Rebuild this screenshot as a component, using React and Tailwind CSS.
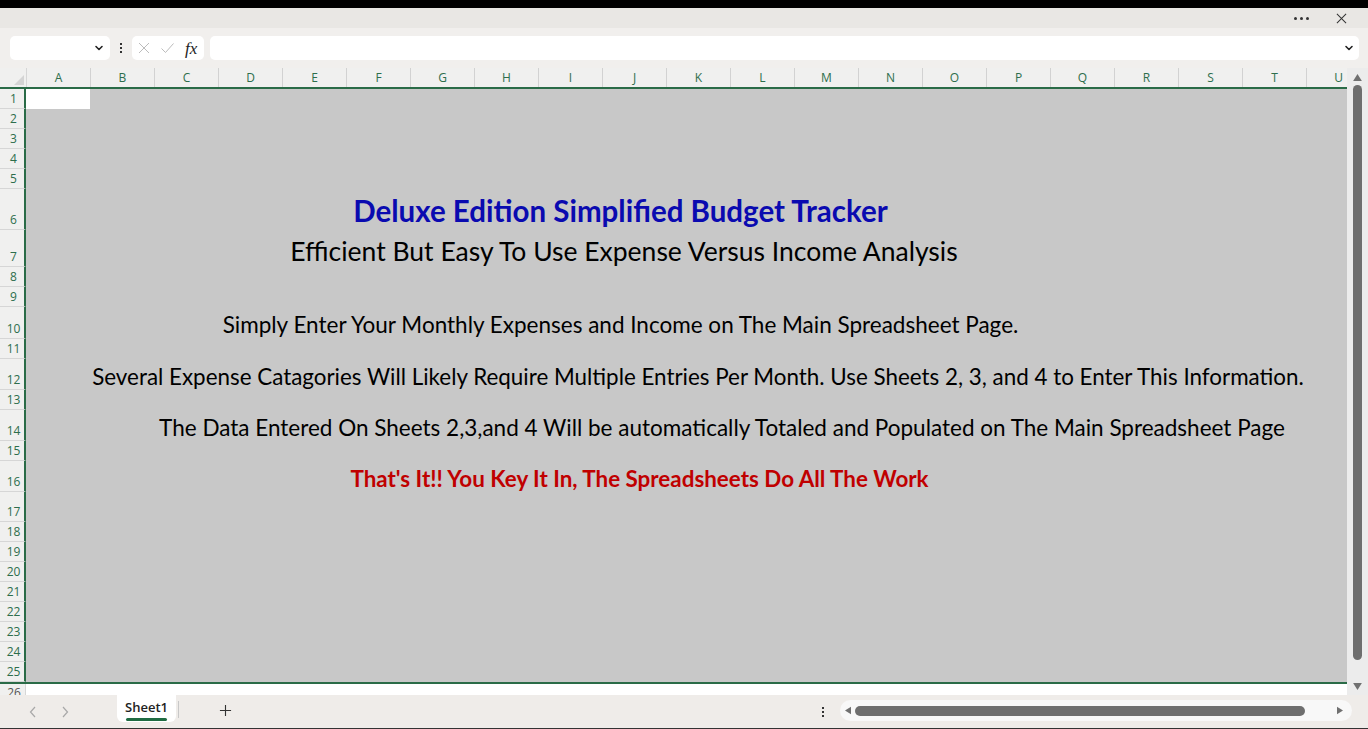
import React from "react";

const COLS = "ABCDEFGHIJKLMNOPQRSTU".split("");

// row number, height in px
const ROWS = [
  [1, 20], [2, 20], [3, 20], [4, 20], [5, 20],
  [6, 41], [7, 37], [8, 20], [9, 20], [10, 32],
  [11, 20], [12, 31], [13, 20], [14, 31], [15, 20],
  [16, 31], [17, 30], [18, 20], [19, 20], [20, 20],
  [21, 20], [22, 20], [23, 20], [24, 20], [25, 20],
];

// text placed in the sheet: left offset within the cell area, box width, classes
const CONTENT = {
  6: {
    left: 325, width: 539, pb: "pb-[5px]",
    cls: "text-[29.5px] font-bold text-[#0a0ab0]",
    text: "Deluxe Edition Simplified Budget Tracker",
  },
  7: {
    left: 262, width: 672, pb: "pb-[3px]",
    cls: "text-[26.5px] text-black",
    text: "Efficient But Easy To Use Expense Versus Income Analysis",
  },
  10: {
    left: 196, width: 797, pb: "pb-[3px]",
    cls: "text-[22.5px] text-black",
    text: "Simply Enter Your Monthly Expenses and Income on The Main Spreadsheet Page.",
  },
  12: {
    left: 68, width: 1208, pb: "pb-[2px]",
    cls: "text-[22.4px] text-black",
    text: "Several Expense Catagories Will Likely Require Multiple Entries Per Month. Use Sheets 2, 3, and 4 to Enter This Information.",
  },
  14: {
    left: 132, width: 1128, pb: "pb-[2px]",
    cls: "text-[22.5px] text-black",
    text: "The Data Entered On Sheets 2,3,and 4 Will be automatically Totaled and Populated on The Main Spreadsheet Page",
  },
  16: {
    left: 324, width: 579, pb: "pb-[2px]",
    cls: "text-[22.4px] font-bold text-[#c00000]",
    text: "That's It!! You Key It In, The Spreadsheets Do All The Work",
  },
};

function Chevron({ className = "" }) {
  return (
    <svg viewBox="0 0 10 10" className={className} fill="none" stroke="#222" strokeWidth="1.6" strokeLinecap="round" strokeLinejoin="round">
      <path d="M2 3.5 L5 6.5 L8 3.5" />
    </svg>
  );
}

function TitleBar() {
  return (
    <div className="h-5 bg-[#e9e7e4] flex items-center justify-end pr-[21px] gap-[27px] shrink-0">
      <div className="flex gap-[3px] items-center">
        <span className="w-[3px] h-[3px] rounded-full bg-[#333]" />
        <span className="w-[3px] h-[3px] rounded-full bg-[#333]" />
        <span className="w-[3px] h-[3px] rounded-full bg-[#333]" />
      </div>
      <svg viewBox="0 0 12 12" className="w-[11px] h-[11px]" stroke="#333" strokeWidth="1.1">
        <path d="M1 1 L11 11 M11 1 L1 11" />
      </svg>
    </div>
  );
}

function FormulaBar() {
  return (
    <div className="h-10 bg-[#f1efed] flex items-center pl-[10px] pr-[9px] shrink-0">
      <div className="w-[100px] h-[24px] bg-white rounded-[5px] flex items-center justify-end pr-[6px]">
        <Chevron className="w-[10px] h-[10px]" />
      </div>
      <div className="w-[22px] flex flex-col items-center gap-[2px]">
        <span className="w-[2px] h-[2px] bg-[#333]" />
        <span className="w-[2px] h-[2px] bg-[#333]" />
        <span className="w-[2px] h-[2px] bg-[#333]" />
      </div>
      <div className="w-[72px] h-[24px] bg-white rounded-[5px] flex items-center pl-[6px] gap-[10px]">
        <svg viewBox="0 0 12 12" className="w-[12px] h-[12px]" stroke="#bcbcbc" strokeWidth="1">
          <path d="M1 1 L11 11 M11 1 L1 11" />
        </svg>
        <svg viewBox="0 0 14 12" className="w-[15px] h-[12px]" fill="none" stroke="#bcbcbc" strokeWidth="1">
          <path d="M1 6.5 L5 10.5 L13 1.5" />
        </svg>
        <span className="text-[17px] italic text-[#222] font-['Liberation_Serif',serif] leading-none">
          fx
        </span>
      </div>
      <div className="ml-[6px] flex-1 h-[24px] bg-white rounded-[5px] flex items-center justify-end pr-[5px]">
        <Chevron className="w-[10px] h-[10px]" />
      </div>
    </div>
  );
}

function ColumnHeaders() {
  return (
    <div className="h-[21px] flex shrink-0 bg-[#f0f0ef] border-b-2 border-[#2a6b47]">
      <div className="w-[27px] shrink-0 relative border-r border-[#d6d6d6]">
        <svg viewBox="0 0 10 10" className="absolute right-[2px] bottom-[2px] w-[10px] h-[10px]">
          <path d="M10 0 L10 10 L0 10 Z" fill="#d4d4d4" />
        </svg>
      </div>
      <div className="flex overflow-hidden flex-1">
        {COLS.map((c) => (
          <div
            key={c}
            className="w-[64px] shrink-0 border-r border-[#d2d2d2] flex items-center justify-center text-[12px] text-[#2d6e4c] font-['Open_Sans',sans-serif]"
          >
            {c}
          </div>
        ))}
      </div>
    </div>
  );
}

function SheetRow({ n, h }) {
  const c = CONTENT[n];
  return (
    <div className="flex shrink-0" style={{ height: h }}>
      <div className="w-[26px] shrink-0 bg-[#f0f0ef] border-r-2 border-r-[#2a6b47] border-b border-b-[#d6d6d6] flex items-end justify-center pl-[3px] pb-[1px] text-[12px] leading-[16px] text-[#2d6e4c] font-['Open_Sans',sans-serif]">
        {n}
      </div>
      <div className="flex-1 bg-[#c8c8c8] flex items-end min-w-0">
        {n === 1 && <div className="w-[64px] h-full bg-white" />}
        {c && (
          <div
            className={`flex justify-center shrink-0 ${c.pb}`}
            style={{ marginLeft: c.left, width: c.width }}
          >
            <span className={`whitespace-nowrap leading-none font-['Lato',sans-serif] ${c.cls}`}>
              {c.text}
            </span>
          </div>
        )}
      </div>
    </div>
  );
}

function VScroll() {
  return (
    <div className="w-[21px] shrink-0 bg-[#ececec] flex flex-col items-center pt-[6px] pb-[3px]">
      <svg viewBox="0 0 10 8" className="w-[9px] h-[7px]">
        <path d="M5 0 L10 8 L0 8 Z" fill="#707070" />
      </svg>
      <div className="w-[9px] h-[575px] mt-[4px] rounded-full bg-[#6e6e6e]" />
      <div className="flex-1" />
      <svg viewBox="0 0 10 8" className="w-[9px] h-[7px] mb-[2px]">
        <path d="M0 0 L10 0 L5 8 Z" fill="#707070" />
      </svg>
    </div>
  );
}

function BottomBar() {
  return (
    <div className="h-[34px] shrink-0 bg-[#efece9] flex items-start border-b border-[#333]">
      <div className="w-[117px] h-full flex items-center pl-[29px] gap-[20px] text-[#a8a8a8]">
        <svg viewBox="0 0 8 12" className="w-[8px] h-[12px]" fill="none" stroke="#a8a8a8" strokeWidth="1.2">
          <path d="M6 1 L1.5 6 L6 11" />
        </svg>
        <svg viewBox="0 0 8 12" className="w-[8px] h-[12px] ml-[4px]" fill="none" stroke="#a8a8a8" strokeWidth="1.2">
          <path d="M2 1 L6.5 6 L2 11" />
        </svg>
      </div>
      <div className="w-[59px] h-[27px] bg-white rounded-b-[6px] flex flex-col items-center pt-[4px]">
        <span className="text-[13px] leading-[16px] font-semibold text-[#222] font-['Open_Sans',sans-serif]">
          Sheet1
        </span>
        <span className="mt-[3px] w-[41px] h-[3px] rounded-full bg-[#1f6b42]" />
      </div>
      <div className="w-px h-[17px] bg-[#c8c8c8] mt-[6px] ml-[2px]" />
      <div className="w-[40px]" />
      <svg viewBox="0 0 14 14" className="w-[13px] h-[13px] mt-[9px]" stroke="#333" strokeWidth="1.2">
        <path d="M7 1 L7 13 M1 7 L13 7" />
      </svg>
      <div className="flex-1" />
      <div className="flex flex-col items-center gap-[2px] mt-[12px] mr-[16px]">
        <span className="w-[2px] h-[2px] bg-[#333]" />
        <span className="w-[2px] h-[2px] bg-[#333]" />
        <span className="w-[2px] h-[2px] bg-[#333]" />
      </div>
      <div className="w-[512px] h-[21px] mt-[5px] mr-[16px] bg-[#f8f8f8] rounded-full flex items-center pl-[5px] pr-[9px]">
        <svg viewBox="0 0 8 10" className="w-[6px] h-[9px]">
          <path d="M8 0 L8 10 L0 5 Z" fill="#707070" />
        </svg>
        <div className="ml-[4px] w-[450px] h-[10px] rounded-full bg-[#6e6e6e]" />
        <div className="flex-1" />
        <svg viewBox="0 0 8 10" className="w-[6px] h-[9px]">
          <path d="M0 0 L8 5 L0 10 Z" fill="#707070" />
        </svg>
      </div>
    </div>
  );
}

export default function App() {
  return (
    <div className="w-[1368px] h-[729px] flex flex-col overflow-hidden bg-[#efece9]">
      <div className="h-2 bg-black shrink-0" />
      <TitleBar />
      <FormulaBar />
      <div className="flex flex-1 min-h-0">
        <div className="flex-1 min-w-0 flex flex-col overflow-hidden bg-white">
          <ColumnHeaders />
          {ROWS.map(([n, h]) => (
            <SheetRow key={n} n={n} h={h} />
          ))}
          <div className="h-[2px] shrink-0 bg-[#2a6b47]" />
          <div className="flex flex-1 min-h-0">
            <div className="w-[26px] shrink-0 bg-[#f0f0ef] border-r border-[#d6d6d6] flex justify-center pl-[3px] text-[12px] leading-[16px] pt-[1px] text-[#555] font-['Open_Sans',sans-serif] overflow-hidden">
              26
            </div>
            <div className="flex-1 bg-white" />
          </div>
        </div>
        <VScroll />
      </div>
      <BottomBar />
    </div>
  );
}
